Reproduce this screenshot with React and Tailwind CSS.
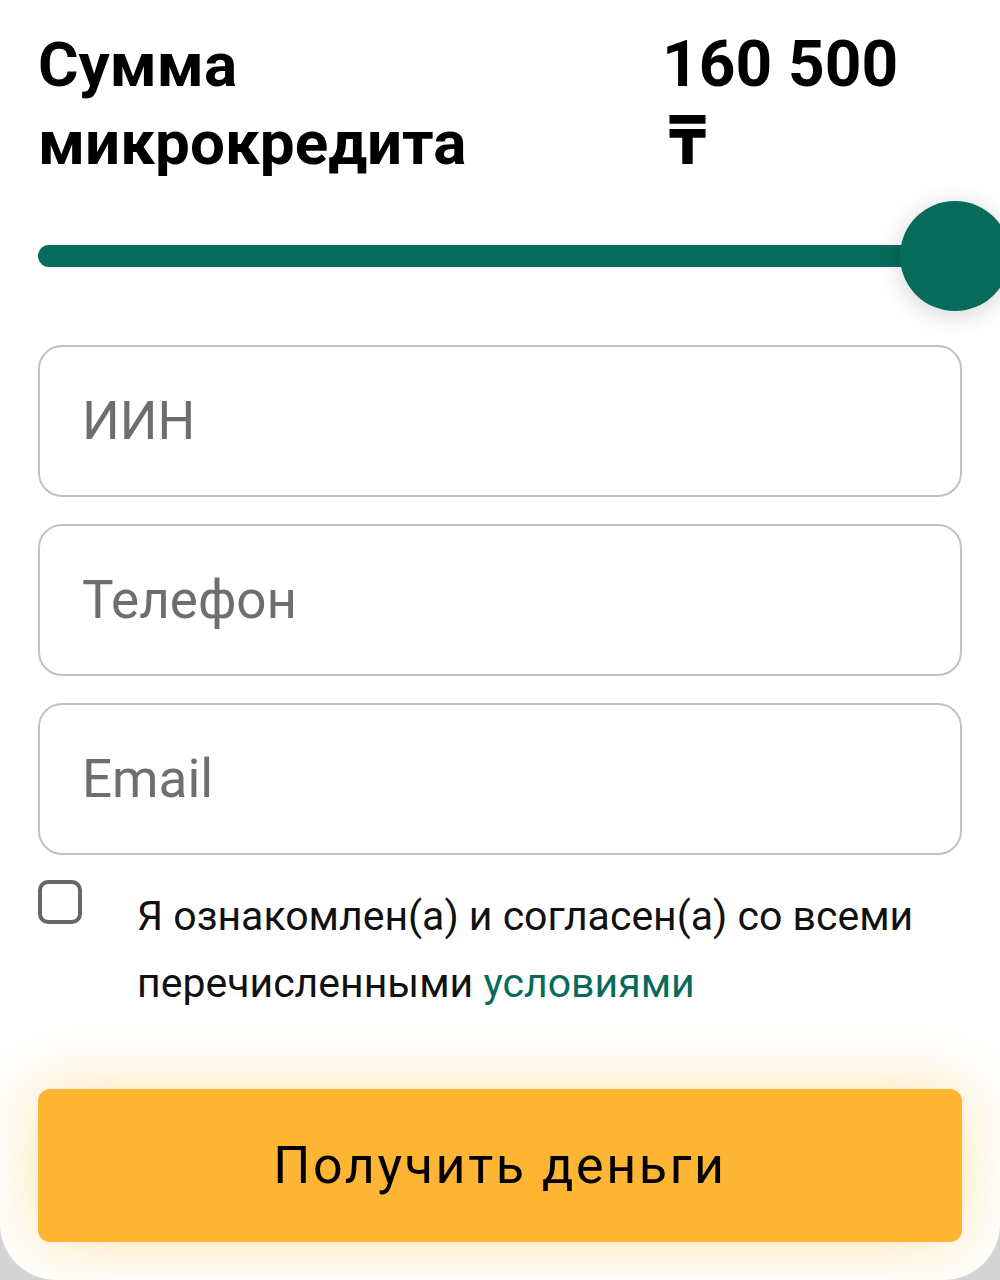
import React, { useState } from "react";

const font = { fontFamily: "Roboto, 'Noto Sans', sans-serif" };

const Field = ({ placeholder }) => (
  <input
    type="text"
    placeholder={placeholder}
    className="w-full h-[152px] rounded-[24px] border-2 border-[#c2c2c2] bg-white px-[42px] text-[53px] text-[#222] placeholder:text-[#6e6e6e] outline-none"
  />
);

export default function App() {
  const [agree, setAgree] = useState(false);

  return (
    <div className="min-h-[1280px] bg-[#d4d4d4]" style={font}>
      <div className="h-[1280px] overflow-hidden rounded-b-[56px] bg-white px-[38px] pt-[26px]">
        {/* Amount header */}
        <div className="flex h-[156px] items-start">
          <h1 className="w-[624px] text-[62px] font-bold leading-[78px] text-black">
            Сумма
            <br />
            микрокредита
          </h1>
          <div className="text-[64px] font-bold leading-[78px] text-black">
            160 500
            <br />
            <span className="pl-[6px] text-[68px] leading-none">₸</span>
          </div>
        </div>

        {/* Slider */}
        <div className="relative mt-[19px] h-[110px] -mr-[38px]">
          <div className="absolute left-0 right-[60px] top-[44px] h-[22px] rounded-full bg-[#076b5b]" />
          <div className="absolute left-[862px] top-0 h-[110px] w-[110px] rounded-full bg-[#076b5b] shadow-[0_4px_24px_rgba(0,0,0,0.18)]" />
        </div>

        {/* Fields */}
        <div className="mt-[34px] flex flex-col gap-[27px]">
          <Field placeholder="ИИН" />
          <Field placeholder="Телефон" />
          <Field placeholder="Email" />
        </div>

        {/* Agreement */}
        <div className="mt-[25px] flex items-start">
          <button
            onClick={() => setAgree(!agree)}
            className="h-[44px] w-[44px] shrink-0 rounded-[10px] border-[4px] border-[#666666] bg-white"
          />
          <p className="ml-[55px] mt-[3px] text-[41px] leading-[67px] text-[#111]">
            Я ознакомлен(а) и согласен(а) со всеми перечисленными{" "}
            <a href="#" className="text-[#076b5b]">
              условиями
            </a>
          </p>
        </div>

        {/* Submit */}
        <button className="mt-[72px] flex h-[153px] w-full items-center justify-center rounded-[12px] bg-[#fdb533] text-[52px] tracking-[0.05em] text-black shadow-[0_0_64px_rgba(253,190,60,0.45)]">
          Получить деньги
        </button>
      </div>
    </div>
  );
}
